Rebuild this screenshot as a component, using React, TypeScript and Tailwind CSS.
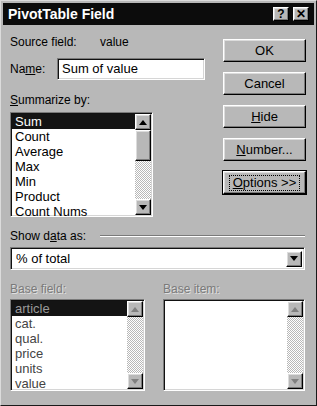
import React from 'react';

const raised =
  'border border-t-white border-l-white border-r-black border-b-black shadow-[inset_-1px_-1px_0_#7a7a7a,inset_1px_1px_0_#dcdcdc]';
const sunken =
  'border border-t-[#7a7a7a] border-l-[#7a7a7a] border-r-white border-b-white shadow-[inset_1px_1px_0_#111,inset_-1px_-1px_0_#d6d6d6]';
const dither =
  'bg-[repeating-conic-gradient(#ffffff_0_25%,#b8b8b8_0_50%)] bg-[length:2px_2px]';

function Arrow({ down, disabled }: { down?: boolean; disabled?: boolean }) {
  return (
    <div className={`w-[16px] h-[16px] bg-[#b8b8b8] flex items-center justify-center ${raised}`}>
      <svg width="8" height="5" viewBox="0 0 8 5">
        <polygon
          points={down ? '0,0 8,0 4,5' : '0,5 8,5 4,0'}
          fill={disabled ? '#808080' : '#000'}
        />
      </svg>
    </div>
  );
}

function Button({ children, focused }: { children: React.ReactNode; focused?: boolean }) {
  return (
    <div
      className={`h-[23px] w-[83px] bg-[#b8b8b8] flex items-center justify-center text-[13px] text-black ${
        focused ? 'outline outline-1 outline-black' : ''
      } ${raised}`}
    >
      {focused ? (
        <span className="px-[3px] border border-dotted border-black leading-[14px]">{children}</span>
      ) : (
        children
      )}
    </div>
  );
}

function ListBox({
  items,
  width,
  height,
  disabled,
  thumb,
}: {
  items: string[];
  width: string;
  height: string;
  disabled?: boolean;
  thumb?: boolean;
}) {
  return (
    <div className={`${width} ${height} bg-white flex ${sunken} p-[1px]`}>
      <div className="flex-1 flex flex-col text-[13px] leading-[15px]">
        {items.map((it, i) => (
          <div
            key={it}
            className={`pl-[3px] ${
              i === 0
                ? disabled
                  ? 'bg-[#141414] text-[#9a9a9a]'
                  : 'bg-[#141414] text-white'
                : disabled
                ? 'text-[#444]'
                : 'text-black'
            }`}
          >
            {it}
          </div>
        ))}
      </div>
      <div className="w-[16px] flex flex-col">
        <Arrow disabled={disabled} />
        {thumb && <div className={`h-[31px] bg-[#b8b8b8] ${raised}`} />}
        <div className={`flex-1 ${dither}`} />
        <Arrow down disabled={disabled} />
      </div>
    </div>
  );
}

export default function App() {
  return (
    <div
      className="w-[317px] h-[406px] bg-[#b8b8b8] border border-t-[#dcdcdc] border-l-[#dcdcdc] border-r-[#1a1a1a] border-b-[#1a1a1a] p-[2px] flex flex-col"
      style={{ fontFamily: '"Liberation Sans", Arial, sans-serif' }}
    >
      {/* Title bar */}
      <div className="h-[22px] bg-[#0c0c0c] flex items-center justify-between pl-[5px] pr-[5px]">
        <span className="text-white font-bold text-[14px]">PivotTable Field</span>
        <div className="flex gap-[4px]">
          <div className={`w-[16px] h-[14px] bg-[#b8b8b8] flex items-center justify-center text-[12px] font-bold text-black ${raised}`}>
            ?
          </div>
          <div className={`w-[16px] h-[14px] bg-[#b8b8b8] flex items-center justify-center text-[12px] font-bold text-black ${raised}`}>
            ✕
          </div>
        </div>
      </div>

      {/* Body */}
      <div className="flex-1 flex flex-col px-[7px] pt-[9px] text-[12px] text-black">
        <div className="flex justify-between">
          <div className="flex flex-col">
            <div className="flex h-[15px] items-center">
              <span className="w-[90px]">Source field:</span>
              <span>value</span>
            </div>
            <div className="flex items-center mt-[9px]">
              <span className="w-[47px]">
                Na<u>m</u>e:
              </span>
              <div className={`w-[148px] h-[22px] bg-white flex items-center pl-[4px] text-[13px] ${sunken}`}>
                Sum of value
              </div>
            </div>
            <div className="mt-[13px] h-[14px] leading-[14px]">
              <u>S</u>ummarize by:
            </div>
            <div className="mt-[5px]">
              <ListBox
                items={['Sum', 'Count', 'Average', 'Max', 'Min', 'Product', 'Count Nums']}
                width="w-[143px]"
                height="h-[105px]"
                thumb
              />
            </div>
          </div>
          <div className="flex flex-col gap-[10px] pt-[5px] pr-[1px]">
            <Button>OK</Button>
            <Button>Cancel</Button>
            <Button>
              <span>
                <u>H</u>ide
              </span>
            </Button>
            <Button>
              <span>
                <u>N</u>umber...
              </span>
            </Button>
            <Button focused>
              <span>
                <u>O</u>ptions &gt;&gt;
              </span>
            </Button>
          </div>
        </div>

        <div className="flex items-center mt-[12px] h-[14px]">
          <span className="whitespace-nowrap">
            Show d<u>a</u>ta as:
          </span>
          <div className="flex-1 ml-[14px] mr-[2px] h-[2px] border-t border-t-[#7a7a7a] border-b border-b-white" />
        </div>
        <div className={`mt-[4px] w-[295px] h-[23px] bg-white flex items-center ${sunken} p-[2px]`}>
          <span className="flex-1 pl-[3px] text-[13px]">% of total</span>
          <Arrow down />
        </div>

        <div className="flex gap-[18px] mt-[12px]">
          <div className="flex flex-col">
            <span className="text-[#7a7a7a] h-[14px] leading-[14px] [text-shadow:1px_1px_0_#e0e0e0]">Base field:</span>
            <div className="mt-[3px]">
              <ListBox
                items={['article', 'cat.', 'qual.', 'price', 'units', 'value']}
                width="w-[135px]"
                height="h-[92px]"
                disabled
              />
            </div>
          </div>
          <div className="flex flex-col">
            <span className="text-[#7a7a7a] h-[14px] leading-[14px] [text-shadow:1px_1px_0_#e0e0e0]">Base item:</span>
            <div className="mt-[3px]">
              <ListBox items={[]} width="w-[142px]" height="h-[92px]" disabled />
            </div>
          </div>
        </div>
      </div>
    </div>
  );
}
